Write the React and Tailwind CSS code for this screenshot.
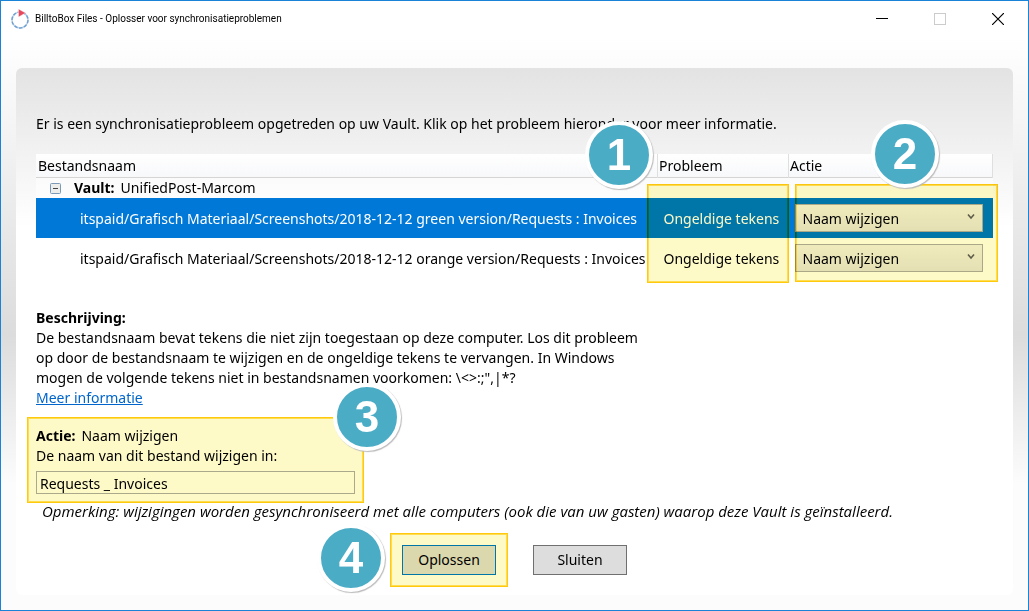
import { useState } from 'react'

const files = [
  { id: 'green', path: 'itspaid/Grafisch Materiaal/Screenshots/2018-12-12 green version/Requests : Invoices' },
  { id: 'orange', path: 'itspaid/Grafisch Materiaal/Screenshots/2018-12-12 orange version/Requests : Invoices' },
]

function Highlight({ className }) {
  return (
    <div className={`pointer-events-none absolute border border-[#ffc90e] bg-[#fefac8] shadow-[inset_0_0_0_1px_#ffdc50] mix-blend-multiply ${className}`} />
  )
}

function Step({ number, className }) {
  return (
    <div
      className={`pointer-events-none absolute flex size-[68px] items-center justify-center rounded-full border-4 border-white bg-[#4bacc6] font-['Liberation_Sans',sans-serif] text-[44px] leading-none font-bold text-white shadow-[1px_1px_1px_#bbbbbb] ${className}`}
    >
      {number}
    </div>
  )
}

function TitleBar() {
  return (
    <header className="flex h-9 items-center bg-white pr-px pl-[9px]">
      <svg className="size-5" viewBox="0 0 20 20" fill="none">
        <circle cx="10" cy="11" r="8" stroke="#c3d8ec" strokeWidth="1.6" />
        <circle cx="10" cy="11" r="8" stroke="#6f9fd0" strokeWidth="1.4" strokeDasharray="3.4 1.6" />
        <path d="M8.5 0v8l7-4z" fill="#e8485c" stroke="#fff" strokeWidth=".4" />
      </svg>
      <h1 className="ml-[5px] flex-1 font-['Roboto',sans-serif] text-[10px]">BilltoBox Files - Oplosser voor synchronisatieproblemen</h1>
      <button aria-label="Minimaliseren" className="flex h-full w-[58px] items-center justify-center">
        <svg width="12" height="12" viewBox="0 0 12 12" stroke="#000" shapeRendering="crispEdges">
          <path d="M0 5.5h12" />
        </svg>
      </button>
      <button aria-label="Maximaliseren" disabled className="flex h-full w-[58px] items-center justify-center">
        <svg width="12" height="12" viewBox="0 0 12 12" fill="none" stroke="#cccccc" shapeRendering="crispEdges">
          <path d="M.5.5h11v11H.5z" />
        </svg>
      </button>
      <button aria-label="Sluiten" className="flex h-full w-[58px] items-center justify-center">
        <svg width="12" height="12" viewBox="0 0 12 12" stroke="#000" strokeWidth="1.2">
          <path d="M0 0l12 12M12 0L0 12" />
        </svg>
      </button>
    </header>
  )
}

function ActionSelect({ label }) {
  return (
    <div className="relative ml-[6px] mr-[10px]">
      <select
        aria-label={label}
        className="block h-7 w-full appearance-none border border-[#acacac] bg-linear-to-b from-[#f0f0f0] to-[#e5e5e5] pt-[2px] pl-[7px] text-black"
      >
        <option>Naam wijzigen</option>
      </select>
      <svg className="pointer-events-none absolute top-[9px] right-2 size-2" viewBox="0 0 8 8" fill="none" stroke="#606060" strokeWidth="1.6">
        <path d="M1 1.5l3 3.5 3-3.5" />
      </svg>
    </div>
  )
}

function ProblemTable({ selected, onSelect }) {
  return (
    <div className="relative mt-5">
      <table className="w-full table-fixed border-collapse bg-white/50">
        <colgroup>
          <col />
          <col className="w-[131px]" />
          <col className="w-[204px]" />
        </colgroup>
        <thead>
          <tr className="h-6 bg-linear-to-b from-white to-[#f7f8fa] text-left shadow-[inset_0_-1px_0_#d5d5d5]">
            <th className="border-r border-[#dfdfdf] pl-[2px] font-normal">Bestandsnaam</th>
            <th className="border-r border-[#dfdfdf] pl-px font-normal">Probleem</th>
            <th className="border-r border-[#dfdfdf] pl-px font-normal">Actie</th>
          </tr>
        </thead>
        <tbody>
          <tr className="h-5">
            <td colSpan={3} className="pl-[14px]">
              <div className="flex items-center">
                <button aria-label="Vault inklappen" className="mr-[13px]">
                  <svg className="block size-[11px]" viewBox="0 0 11 11">
                    <rect x=".5" y=".5" width="10" height="10" rx="1" fill="#ededeb" stroke="#7a9ab8" />
                    <path d="M3 5.5h5" stroke="#444" />
                  </svg>
                </button>
                <b className="mr-[6px]">Vault:</b>
                UnifiedPost-Marcom
              </div>
            </td>
          </tr>
          {files.map(file => (
            <tr
              key={file.id}
              onClick={() => onSelect(file.id)}
              className={`h-10 ${selected === file.id ? 'bg-[#0078d7] text-white' : 'bg-white'}`}
            >
              <td className="pt-[2px] pl-11 whitespace-nowrap">{file.path}</td>
              <td className="pt-[2px] pl-[6px] whitespace-nowrap">Ongeldige tekens</td>
              <td><ActionSelect label={`Actie voor ${file.path}`} /></td>
            </tr>
          ))}
        </tbody>
      </table>
      <Highlight className="top-[30px] right-[204px] h-[99px] w-[142px]" />
      <Highlight className="top-[30px] right-[-5px] h-[98px] w-[203px]" />
      <Step number={1} className="top-[-33px] right-[340px]" />
      <Step number={2} className="top-[-34px] right-[54px]" />
    </div>
  )
}

export default function App() {
  const [selected, setSelected] = useState('green')
  const [name, setName] = useState('Requests _ Invoices')

  return (
    <div className="flex min-h-screen flex-col border border-[#1883d7] bg-white font-['Noto_Sans',sans-serif] text-[14px] leading-5 text-black">
      <TitleBar />
      <main className="flex flex-1 flex-col bg-linear-to-b from-white via-[#dcdcdc] via-52% to-[#fcfcfc] to-78% px-[15px] pt-[31px] pb-[15px]">
        <div className="flex-1 rounded-md bg-linear-to-b from-[#e3e3e3] to-white to-30% px-5 pt-[46px]">
          <p>
            Er is een synchronisatieprobleem opgetreden op uw Vault. Klik op het probleem hieronder voor meer informatie.
          </p>

          <ProblemTable selected={selected} onSelect={setSelected} />

          <section className="mt-[30px] max-w-[616px]">
            <h2 className="font-bold">Beschrijving:</h2>
            <p>
              De bestandsnaam bevat tekens die niet zijn toegestaan op deze computer. Los dit probleem op door de
              bestandsnaam te wijzigen en de ongeldige tekens te vervangen. In Windows mogen de volgende tekens niet in
              bestandsnamen voorkomen: {'\\<>:;",|*?'}
            </p>
            <a href="#info" className="text-[#0066cc] underline">Meer informatie</a>
          </section>

          <section className="relative mt-[18px] w-[319px]">
            <p><b className="mr-[6px]">Actie:</b>Naam wijzigen</p>
            <label htmlFor="new-name" className="block">De naam van dit bestand wijzigen in:</label>
            <input
              id="new-name"
              value={name}
              onChange={e => setName(e.target.value)}
              className="mt-[5px] block h-[23px] w-full border border-[#abadb3] bg-white px-[3px] pt-[2px] outline-none"
            />
            <Highlight className="-inset-[9px]" />
            <Step number={3} className="top-[-43px] right-[-46px]" />
          </section>

          <p className="mt-[7px] ml-[6px] font-['Open_Sans',sans-serif] text-[15px] italic">
            Opmerking: wijzigingen worden gesynchroniseerd met alle computers (ook die van uw gasten) waarop deze Vault is geïnstalleerd.
          </p>

          <div className="mt-6 flex justify-center gap-[37px]">
            <div className="relative">
              <button className="block h-[30px] w-[94px] border border-[#0078d7] bg-[#dddddd]">Oplossen</button>
              <Highlight className="-inset-3" />
              <Step number={4} className="top-[-21px] left-[-85px]" />
            </div>
            <button className="h-[30px] w-[94px] border border-[#707070] bg-[#dddddd]">Sluiten</button>
          </div>
        </div>
      </main>
    </div>
  )
}
